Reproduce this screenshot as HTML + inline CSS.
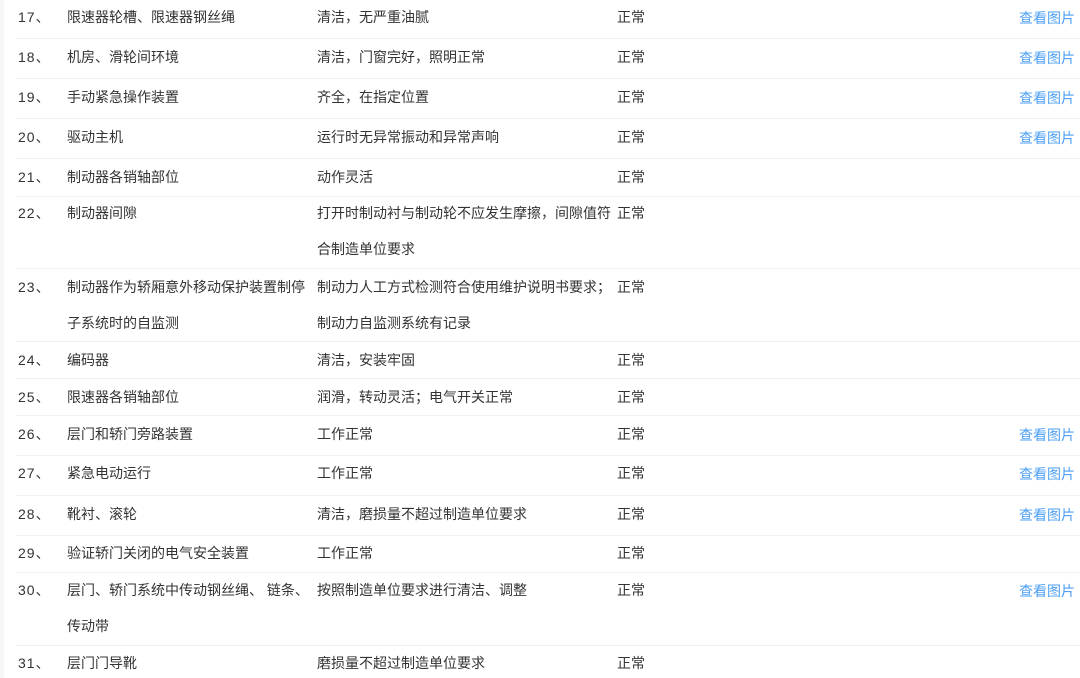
<!DOCTYPE html>
<html><head><meta charset="utf-8"><style>
html,body{margin:0;padding:0;background:#fff;width:1080px;height:678px;overflow:hidden}
body{font-family:"Liberation Sans","Noto Sans CJK SC",sans-serif;font-size:14px;color:#333;position:relative}
.strip{position:absolute;left:0;top:0;width:4px;height:678px;background:#f7f7f8}
.line{position:absolute;left:16px;right:0;height:1px;background:#eef0f4}
.t{position:absolute;line-height:36px;white-space:nowrap}
.n{letter-spacing:1px}
.a{position:absolute;left:1019px;line-height:36px;color:#4c9ff5}
</style></head><body>
<div class="strip"></div>
<div class="line" style="top:38px"></div>
<div class="line" style="top:78px"></div>
<div class="line" style="top:118px"></div>
<div class="line" style="top:158px"></div>
<div class="line" style="top:196px"></div>
<div class="line" style="top:268px"></div>
<div class="line" style="top:341px"></div>
<div class="line" style="top:378px"></div>
<div class="line" style="top:415px"></div>
<div class="line" style="top:455px"></div>
<div class="line" style="top:495px"></div>
<div class="line" style="top:535px"></div>
<div class="line" style="top:572px"></div>
<div class="line" style="top:645px"></div>

<div class="t n" style="top:-1px;left:18px">17、</div><div class="t" style="top:-1px;left:67px">限速器轮槽、限速器钢丝绳</div><div class="t" style="top:-1px;left:317px">清洁，无严重油腻</div><div class="t" style="top:-1px;left:617px">正常</div><div class="a" style="top:0px">查看图片</div>

<div class="t n" style="top:39px;left:18px">18、</div><div class="t" style="top:39px;left:67px">机房、滑轮间环境</div><div class="t" style="top:39px;left:317px">清洁，门窗完好，照明正常</div><div class="t" style="top:39px;left:617px">正常</div><div class="a" style="top:40px">查看图片</div>

<div class="t n" style="top:79px;left:18px">19、</div><div class="t" style="top:79px;left:67px">手动紧急操作装置</div><div class="t" style="top:79px;left:317px">齐全，在指定位置</div><div class="t" style="top:79px;left:617px">正常</div><div class="a" style="top:80px">查看图片</div>

<div class="t n" style="top:119px;left:18px">20、</div><div class="t" style="top:119px;left:67px">驱动主机</div><div class="t" style="top:119px;left:317px">运行时无异常振动和异常声响</div><div class="t" style="top:119px;left:617px">正常</div><div class="a" style="top:120px">查看图片</div>

<div class="t n" style="top:159px;left:18px">21、</div><div class="t" style="top:159px;left:67px">制动器各销轴部位</div><div class="t" style="top:159px;left:317px">动作灵活</div><div class="t" style="top:159px;left:617px">正常</div>

<div class="t n" style="top:195px;left:18px">22、</div><div class="t" style="top:195px;left:67px">制动器间隙</div><div class="t" style="top:195px;left:317px">打开时制动衬与制动轮不应发生摩擦，间隙值符<br>合制造单位要求</div><div class="t" style="top:195px;left:617px">正常</div>

<div class="t n" style="top:269px;left:18px">23、</div><div class="t" style="top:269px;left:67px">制动器作为轿厢意外移动保护装置制停<br>子系统时的自监测</div><div class="t" style="top:269px;left:317px">制动力人工方式检测符合使用维护说明书要求；<br>制动力自监测系统有记录</div><div class="t" style="top:269px;left:617px">正常</div>

<div class="t n" style="top:342px;left:18px">24、</div><div class="t" style="top:342px;left:67px">编码器</div><div class="t" style="top:342px;left:317px">清洁，安装牢固</div><div class="t" style="top:342px;left:617px">正常</div>

<div class="t n" style="top:379px;left:18px">25、</div><div class="t" style="top:379px;left:67px">限速器各销轴部位</div><div class="t" style="top:379px;left:317px">润滑，转动灵活；电气开关正常</div><div class="t" style="top:379px;left:617px">正常</div>

<div class="t n" style="top:416px;left:18px">26、</div><div class="t" style="top:416px;left:67px">层门和轿门旁路装置</div><div class="t" style="top:416px;left:317px">工作正常</div><div class="t" style="top:416px;left:617px">正常</div><div class="a" style="top:417px">查看图片</div>

<div class="t n" style="top:455px;left:18px">27、</div><div class="t" style="top:455px;left:67px">紧急电动运行</div><div class="t" style="top:455px;left:317px">工作正常</div><div class="t" style="top:455px;left:617px">正常</div><div class="a" style="top:456px">查看图片</div>

<div class="t n" style="top:496px;left:18px">28、</div><div class="t" style="top:496px;left:67px">靴衬、滚轮</div><div class="t" style="top:496px;left:317px">清洁，磨损量不超过制造单位要求</div><div class="t" style="top:496px;left:617px">正常</div><div class="a" style="top:497px">查看图片</div>

<div class="t n" style="top:535px;left:18px">29、</div><div class="t" style="top:535px;left:67px">验证轿门关闭的电气安全装置</div><div class="t" style="top:535px;left:317px">工作正常</div><div class="t" style="top:535px;left:617px">正常</div>

<div class="t n" style="top:572px;left:18px">30、</div><div class="t" style="top:572px;left:67px">层门、轿门系统中传动钢丝绳、 链条、<br>传动带</div><div class="t" style="top:572px;left:317px">按照制造单位要求进行清洁、调整</div><div class="t" style="top:572px;left:617px">正常</div><div class="a" style="top:573px">查看图片</div>

<div class="t n" style="top:645px;left:18px">31、</div><div class="t" style="top:645px;left:67px">层门门导靴</div><div class="t" style="top:645px;left:317px">磨损量不超过制造单位要求</div><div class="t" style="top:645px;left:617px">正常</div>
</body></html>
